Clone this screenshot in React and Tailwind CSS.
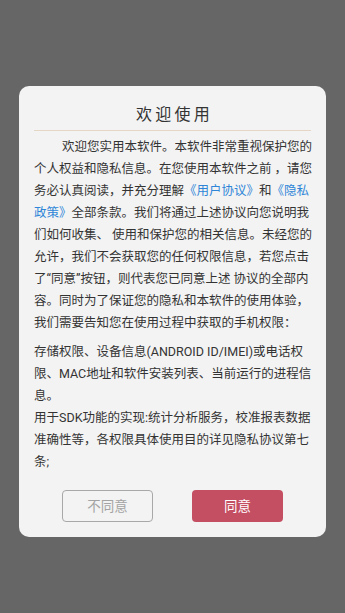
/* Privacy consent dialog shown on first launch, over a dimmed screen. */

const FONT = { fontFamily: 'Roboto, "Noto Sans CJK SC", sans-serif' };

function Link({ children }) {
  return <span className="text-[#2f86d8]">{children}</span>;
}

export default function App() {
  return (
    <div className="h-[613px] w-full bg-[#666666] pt-[86px]" style={FONT}>
      <div className="mx-[19px] w-[307px] rounded-[10px] bg-[#f3f3f3] pt-[18px] pb-[15px]">
        <div className="pl-[4px] text-center text-[16px] leading-[22px] tracking-[3.3px] text-[#333]">
          欢迎使用
        </div>
        <div className="mx-[15px] mt-[4px] h-px bg-[#e6d6c6]" />

        <div className="mt-[5px] pl-[15px] pr-[12px] text-[12.5px] leading-[22px] text-[#333]">
          <p className="indent-[28px]">
            欢迎您实用本软件。本软件非常重视保护您的个人权益和隐私信息。在您使用本软件之前 ，请您务必认真阅读，并充分理解
            <Link>《用户协议》</Link>和<Link>《隐私政策》</Link>
            全部条款。我们将通过上述协议向您说明我们如何收集、 使用和保护您的相关信息。未经您的允许，我们不会获取您的任何权限信息，若您点击了“同意”按钮，则代表您已同意上述 协议的全部内容。同时为了保证您的隐私和本软件的使用体验，我们需要告知您在使用过程中获取的手机权限：
          </p>
          <p className="mt-[7px]">
            存储权限、设备信息(ANDROID ID/IMEI)或电话权限、MAC地址和软件安装列表、当前运行的进程信息。
          </p>
          <p>用于SDK功能的实现:统计分析服务，校准报表数据准确性等，各权限具体使用目的详见隐私协议第七条;</p>
        </div>

        <div className="mt-[17px] flex justify-center gap-[39px]">
          <button className="h-[32px] w-[91px] rounded-[4px] border border-[#a8a8a8] text-[13.5px] text-[#a3a3a3]">
            不同意
          </button>
          <button className="h-[32px] w-[91px] rounded-[4px] bg-[#c44e62] text-[13.5px] text-white">
            同意
          </button>
        </div>
      </div>
    </div>
  );
}
